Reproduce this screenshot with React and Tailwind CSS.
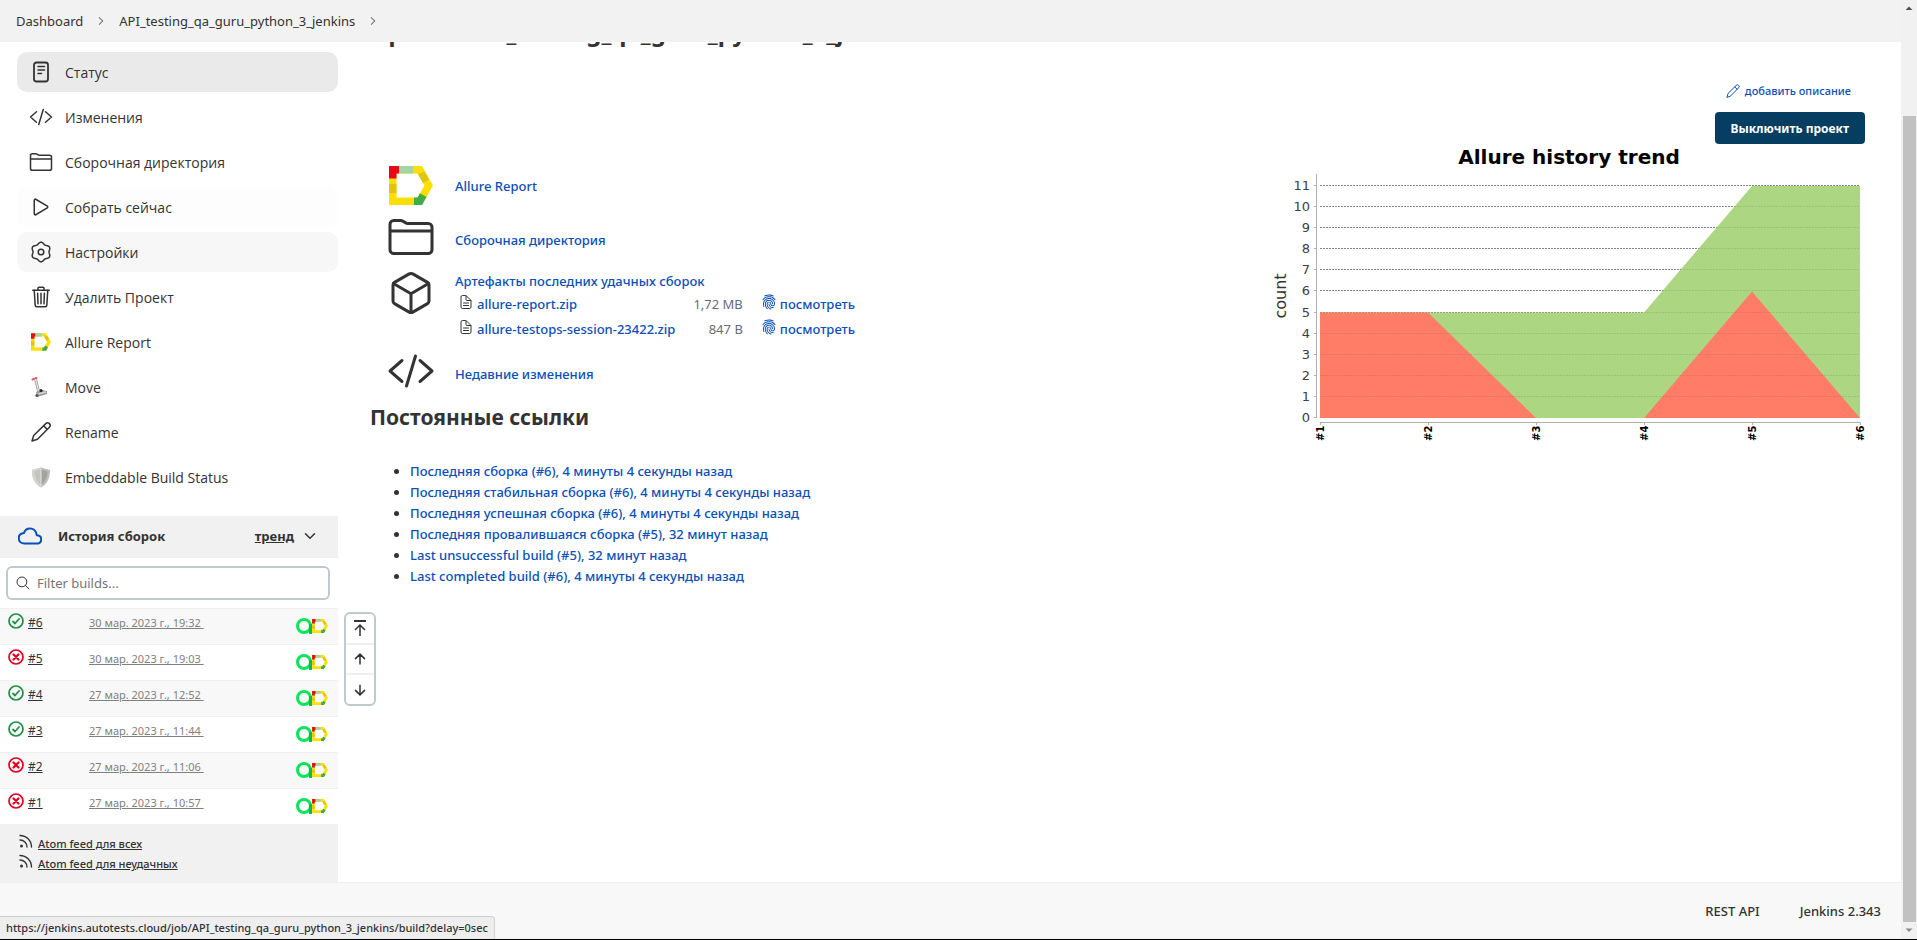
import React from "react";
import {
  IoCodeSlashOutline,
  IoFolderOutline,
  IoPlayOutline,
  IoTrashOutline,
  IoCubeOutline,
  IoCloudOutline,
  IoSearchOutline,
  IoChevronDown,
  IoChevronForward,
  IoDocumentTextOutline,
  IoFingerPrint,
  IoArrowUp,
  IoArrowDown,
} from "react-icons/io5";

function AllureLogo({ className }) {
  return (
    <svg viewBox="0 0 44 39" className={className} aria-hidden="true">
      <path d="M0 0H33L44 19.500 33 39H0zM7.500 7.500V31.500H28.500L35.500 19.500 28.500 7.500z" fill="#ffde05" fillRule="evenodd" />
      <path d="M0 0H10V7.500H7.500V12.500H0z" fill="#e60a14" />
      <path d="M10 0H24V7.500H10z" fill="#a6d3a4" />
      <path d="M29 8L35.500 5.500 40 13.500 34 17z" fill="#e0c414" />
      <path d="M25 31.500H28.500L31 27.300 37.500 31 33 39H25z" fill="#3dac49" />
      <path d="M0 18H7.500V27H0z" fill="#e0c414" />
    </svg>
  );
}

function TestOpsLogo() {
  return (
    <svg viewBox="0 0 16 16" className="size-4" aria-hidden="true">
      <circle cx="8" cy="8" r="6.500" fill="none" stroke="#0be45c" strokeWidth="3" />
      <path d="M14.500 6v10" stroke="#14b84e" strokeWidth="3" />
    </svg>
  );
}

function StatusIcon({ className }) {
  return (
    <svg viewBox="0 0 24 24" className={className} aria-hidden="true" fill="none" stroke="currentColor" strokeLinecap="round">
      <rect x="5" y="2.500" width="14" height="19" rx="2.500" strokeWidth="1.800" />
      <path d="M9 6.500h6.500M9 10h6.500M9 13.500h3.500" strokeWidth="1.500" />
    </svg>
  );
}

const gearPath =
  Array.from({ length: 72 }, (_, i) => {
    const t = (i * Math.PI) / 36;
    const r = 8.9 + 0.9 * Math.cos(6 * t);
    return `${i ? "L" : "M"}${(12 + r * Math.sin(t)).toFixed(2)} ${(12 - r * Math.cos(t)).toFixed(2)}`;
  }).join("") + "z";

function GearIcon({ className }) {
  return (
    <svg viewBox="0 0 24 24" className={className} aria-hidden="true" fill="none" stroke="currentColor" strokeWidth="1.500" strokeLinejoin="round">
      <path d={gearPath} />
      <circle cx="12" cy="12" r="2.800" />
    </svg>
  );
}

function PencilIcon({ className }) {
  return (
    <svg viewBox="0 0 24 24" className={className} aria-hidden="true" fill="none" stroke="currentColor" strokeWidth="1.500" strokeLinejoin="round" strokeLinecap="round">
      <path d="M3 21l1.700-5.500L16.800 3.600a2.500 2.500 0 0 1 3.600 3.600L8.500 19.300zM14.600 5.800l3.600 3.600" />
    </svg>
  );
}

function MoveIcon({ className }) {
  return (
    <svg viewBox="0 0 24 24" className={className} aria-hidden="true">
      <path d="M3.500 4.500L7.500 3" stroke="#d9606a" strokeWidth="2" strokeLinecap="round" />
      <path d="M6.500 4L10 18" stroke="#a5a5a5" strokeWidth="3" />
      <path d="M6.500 4L10 18" stroke="#efefef" strokeWidth="1" />
      <path d="M7 17l5-2 6 1v3l-10 3z" fill="#9a9a9a" />
      <path d="M9 19l8-2" stroke="#d6d6d6" strokeWidth="1.500" />
      <circle cx="12" cy="15.500" r="1.500" fill="#222" />
      <circle cx="8" cy="20.500" r="1.600" fill="#555" />
    </svg>
  );
}

function ShieldIcon({ className }) {
  return (
    <svg viewBox="0 0 24 24" className={className} aria-hidden="true">
      <path d="M12 2.500l9 2.500c.3 7-2.500 14-9 17.500C5.500 19 2.700 12 3 5z" fill="#bdbdb9" />
      <path d="M12 2.500v20C5.500 19 2.700 12 3 5z" fill="#d3d3cf" />
      <path d="M12 4.500l-6.500 2C5.500 12 8 17 12 20z" fill="#c4c4c0" />
      <path d="M12 4.500l6.500 2C18.500 12 16 17 12 20z" fill="#a3a39f" />
      <path d="M12 4v17" stroke="#e6e6e4" strokeWidth="1" />
    </svg>
  );
}

function FeedIcon() {
  return (
    <svg viewBox="0 0 16 16" className="size-4" aria-hidden="true" fill="none" stroke="#333" strokeWidth="1.400" strokeLinecap="round">
      <circle cx="3.500" cy="12" r="1.500" fill="#333" stroke="none" />
      <path d="M2 6a7 7 0 0 1 7 7M2 1.500a11.500 11.500 0 0 1 11.500 11.500" />
    </svg>
  );
}

function StatusBall({ ok }) {
  return (
    <svg viewBox="0 0 16 16" className="size-4 shrink-0" role="img" aria-label={ok ? "Success" : "Failed"} fill="none" stroke={ok ? "#1e8f46" : "#e6001f"}>
      <circle cx="8" cy="8" r="7" strokeWidth="1.700" />
      {ok ? (
        <path d="M5 8.500l2 2 4-4.500" strokeWidth="1.800" strokeLinecap="round" strokeLinejoin="round" />
      ) : (
        <path d="M5.500 5.500l5 5M10.500 5.500l-5 5" strokeWidth="2.200" strokeLinecap="round" />
      )}
    </svg>
  );
}

function TopIcon() {
  return (
    <svg viewBox="0 0 16 16" className="size-4" aria-hidden="true" fill="none" stroke="#333" strokeWidth="1.500">
      <path d="M2 1h12" strokeWidth="2" />
      <path d="M8 16V5M3 10l5-5 5 5" />
    </svg>
  );
}

const tasks = [
  { label: "Статус", Icon: StatusIcon, size: "size-6", tone: "bg-[#eaeaea]" },
  { label: "Изменения", Icon: IoCodeSlashOutline, size: "size-6", tone: "" },
  { label: "Сборочная директория", Icon: IoFolderOutline, size: "size-6", tone: "" },
  { label: "Собрать сейчас", Icon: IoPlayOutline, size: "size-6", tone: "bg-[#fdfdfd]" },
  { label: "Настройки", Icon: GearIcon, size: "size-6", tone: "bg-[#f7f7f7]" },
  { label: "Удалить Проект", Icon: IoTrashOutline, size: "size-6", tone: "" },
  { label: "Allure Report", Icon: AllureLogo, size: "mx-0.5 h-[18px] w-5", tone: "" },
  { label: "Move", Icon: MoveIcon, size: "size-6", tone: "" },
  { label: "Rename", Icon: PencilIcon, size: "size-6", tone: "" },
  { label: "Embeddable Build Status", Icon: ShieldIcon, size: "size-6", tone: "" },
];

const builds = [
  { id: "#6", ok: true, date: "30 мар. 2023 г., 19:32" },
  { id: "#5", ok: false, date: "30 мар. 2023 г., 19:03" },
  { id: "#4", ok: true, date: "27 мар. 2023 г., 12:52" },
  { id: "#3", ok: true, date: "27 мар. 2023 г., 11:44" },
  { id: "#2", ok: false, date: "27 мар. 2023 г., 11:06" },
  { id: "#1", ok: false, date: "27 мар. 2023 г., 10:57" },
];

const permalinks = [
  "Последняя сборка (#6), 4 минуты 4 секунды назад",
  "Последняя стабильная сборка (#6), 4 минуты 4 секунды назад",
  "Последняя успешная сборка (#6), 4 минуты 4 секунды назад",
  "Последняя провалившаяся сборка (#5), 32 минут назад",
  "Last unsuccessful build (#5), 32 минут назад",
  "Last completed build (#6), 4 минуты 4 секунды назад",
];

const artifacts = [
  { name: "allure-report.zip", size: "1,72 MB" },
  { name: "allure-testops-session-23422.zip", size: "847 B" },
];

const failed = [5, 5, 0, 0, 6, 0];
const total = [5, 5, 5, 5, 11, 11];

function TrendChart() {
  const left = 55;
  const step = 108;
  const base = 274;
  const unit = 21.1;
  const x = (i) => left + i * step;
  const y = (v) => base - v * unit;
  const area = (vals) =>
    `${x(0)},${base} ` + vals.map((v, i) => `${x(i)},${y(v)}`).join(" ") + ` ${x(5)},${base}`;
  const levels = Array.from({ length: 12 }, (_, i) => i);
  const lineY = (v) => Math.round(y(v)) - 0.5;
  return (
    <svg width="600" height="304" viewBox="0 0 600 304" role="img" aria-label="Allure history trend" fontFamily="DejaVu Sans, sans-serif">
      <clipPath id="total-area">
        <polygon points={area(total)} />
      </clipPath>
      <text x="304" y="20" textAnchor="middle" fontSize="20" fontWeight="700" fill="#000">
        Allure history trend
      </text>
      {levels.slice(1).map((v) => (
        <line key={v} x1={left} x2={x(5)} y1={lineY(v)} y2={lineY(v)} stroke="#808080" strokeDasharray="2 1" />
      ))}
      <polygon points={area(total)} fill="#add683" />
      <polygon points={area(failed)} fill="#ff7d66" />
      <g clipPath="url(#total-area)">
        {levels.slice(1).map((v) => (
          <line key={v} x1={left} x2={x(5)} y1={lineY(v)} y2={lineY(v)} stroke="#404040" strokeOpacity="0.15" strokeDasharray="2 1" />
        ))}
      </g>
      <path d={`M51.5 30V${base}`} stroke="#b0b0b0" />
      <path d={`M${left} 278.5H${x(5) + 1}`} stroke="#b0b0b0" />
      {levels.map((v) => (
        <g key={v}>
          <path d={`M49 ${lineY(v)}h3`} stroke="#b0b0b0" />
          <text x="45" y={Math.round(y(v)) + 4} textAnchor="end" fontSize="13" fill="#404040">
            {v}
          </text>
        </g>
      ))}
      {failed.map((_, i) => (
        <g key={i}>
          <path d={`M${x(i) + 0.5} 278v3`} stroke="#b0b0b0" />
          <text transform={`translate(${x(i) + 4} 297) rotate(-90)`} fontSize="10" fontWeight="700" fill="#000">
            #{i + 1}
          </text>
        </g>
      ))}
      <text transform="translate(21 152) rotate(-90)" textAnchor="middle" fontSize="16" fill="#333">
        count
      </text>
    </svg>
  );
}

const link = "text-[#0b4fb8]";

export default function App() {
  return (
    <div className="flex min-h-screen border-b border-black bg-white font-['Noto_Sans',sans-serif] text-[13px] leading-[21px] font-medium text-[#333]">
      <div className="relative flex min-w-0 flex-1 flex-col">
        <header className="relative z-10 h-[42px] bg-[#f2f2f2]">
          <nav aria-label="Breadcrumb" className="flex h-full items-center gap-3 pl-4 font-normal">
            <a href="#dashboard">Dashboard</a>
            <IoChevronForward className="size-3 text-[#808080]" />
            <a href="#project">API_testing_qa_guru_python_3_jenkins</a>
            <IoChevronForward className="size-3 text-[#808080]" />
          </nav>
        </header>

        <div className="flex">
          <aside className="flex w-[338px] shrink-0 flex-col">
            <nav aria-label="Project" className="flex flex-col gap-[5px] pt-[10px] pb-[19px] pl-[17px] font-['Open_Sans',sans-serif] text-[14px]">
              {tasks.map(({ label, Icon, size, tone }) => (
                <a key={label} href="#task" className={`flex h-10 items-center gap-3 rounded-[10px] pl-3 ${tone}`}>
                  <Icon className={size} />
                  <span>{label}</span>
                </a>
              ))}
            </nav>

            <div className="flex h-[42px] items-center bg-[#f1f1f1] pr-[20px] pb-0.5 pl-[18px]">
              <IoCloudOutline className="size-6 text-[#0b4fb8] [&_path]:[stroke-width:44]" />
              <h2 className="ml-4 flex-1 font-bold">История сборок</h2>
              <a href="#trend" className="font-bold underline">тренд</a>
              <IoChevronDown className="ml-2 size-4" />
            </div>

            <div className="py-2 pr-2 pl-[6px]">
              <label className="flex h-[34px] items-center gap-1.5 rounded-md border-2 border-[#bfcacd] px-[7px]">
                <IoSearchOutline className="size-4 shrink-0" />
                <input type="text" aria-label="Filter builds" placeholder="Filter builds..." className="w-full font-normal outline-none placeholder:text-[#757575]" />
              </label>
            </div>

            <table className="w-full border-separate border-spacing-0 text-[11px] leading-5 font-normal">
              <tbody>
                {builds.map((b, i) => (
                  <tr key={b.id} className={`h-9 *:border-t *:border-[#efefef] ${i % 2 ? "bg-white" : "bg-[#f8f8f8]"}`}>
                    <td className="w-[89px] pl-2 align-top">
                      <span className="flex items-start gap-1 pt-1">
                        <StatusBall ok={b.ok} />
                        <a href="#build" className="text-[12px] underline">{b.id}</a>
                      </span>
                    </td>
                    <td className="pt-1 align-top">
                      <a href="#build" className="whitespace-pre text-[#808080] underline">{b.date + " "}</a>
                    </td>
                    <td className="pr-[10px] pb-px">
                      <span className="flex items-center justify-end">
                        <TestOpsLogo />
                        <AllureLogo className="h-[14px] w-4" />
                      </span>
                    </td>
                  </tr>
                ))}
              </tbody>
            </table>

            <div className="flex h-[58px] flex-col bg-[#f1f1f1] pt-[10px] pl-[18px] text-[11px] leading-5">
              {["Atom feed для всех", "Atom feed для неудачных"].map((t) => (
                <a key={t} href="#feed" className="flex items-start gap-1">
                  <FeedIcon />
                  <span className="underline">{t}</span>
                </a>
              ))}
            </div>
          </aside>

          <main className="min-w-0 flex-1 pr-9 pl-8">
            <h1 className="-mt-[30px] h-10 text-[24px] leading-10 font-bold">Проект API_testing_qa_guru_python_3_jenkins</h1>
            <div className="flex justify-between">
              <div>
                <div className="mt-[107px] ml-[17px] grid grid-cols-[68px_auto] grid-rows-[54px_54px_auto_54px] items-center">
                  <AllureLogo className="mb-0.5 ml-0.5 h-[39px] w-11" />
                  <a href="#allure" className={link}>Allure Report</a>
                  <IoFolderOutline className="mb-1.5 size-12" />
                  <a href="#workspace" className={link}>Сборочная директория</a>
                  <IoCubeOutline className="mt-0.5 size-12 self-start" />
                  <div className="pt-1 pb-[5px]">
                    <a href="#artifacts" className={link}>Артефакты последних удачных сборок</a>
                    <table>
                      <tbody>
                        {artifacts.map((a) => (
                          <tr key={a.name} className="h-[25px]">
                            <td className="pl-[3px]">
                              <a href="#file" className={`flex items-start gap-[3px] ${link}`}>
                                <IoDocumentTextOutline className="size-4 text-[#333]" />
                                {a.name}
                              </a>
                            </td>
                            <td className="pl-[18px] text-right font-normal text-[#6b6b75]">{a.size}</td>
                            <td className="pl-[18px]">
                              <a href="#view" className={`flex items-start gap-[3px] ${link}`}>
                                <IoFingerPrint className="size-4" />
                                посмотреть
                              </a>
                            </td>
                          </tr>
                        ))}
                      </tbody>
                    </table>
                  </div>
                  <IoCodeSlashOutline className="mb-1.5 size-12" />
                  <a href="#changes" className={link}>Недавние изменения</a>
                </div>
                <h2 className="mt-px text-[21px] leading-[30px] font-bold">Постоянные ссылки</h2>
                <ul className="mt-[29px] list-disc pl-10">
                  {permalinks.map((t) => (
                    <li key={t}>
                      <a href="#permalink" className={link}>{t}</a>
                    </li>
                  ))}
                </ul>
              </div>

              <div className="flex flex-col items-end pt-7">
                <a href="#description" className={`mr-[14px] flex items-center gap-1 text-[11px] ${link}`}>
                  <PencilIcon className="size-4" />
                  добавить описание
                </a>
                <button type="button" className="mt-[11px] h-8 rounded bg-[#063e61] px-4 text-[12px] font-bold text-white">
                  Выключить проект
                </button>
                <TrendChart />
              </div>
            </div>
          </main>
        </div>

        <div className="absolute top-[612px] left-[344px] flex h-[94px] w-8 flex-col divide-y-2 divide-[#efefef] rounded-md border-2 border-[#bfcacd] bg-white">
          <button type="button" aria-label="Newest" className="flex flex-1 items-center justify-center"><TopIcon /></button>
          <button type="button" aria-label="Newer" className="flex flex-1 items-center justify-center"><IoArrowUp className="size-4" /></button>
          <button type="button" aria-label="Older" className="flex flex-1 items-center justify-center"><IoArrowDown className="size-4" /></button>
        </div>

        <footer className="flex flex-1 items-center justify-end gap-10 border-t border-[#efefef] bg-[#f8f8f8] pr-5">
          <a href="#api">REST API</a>
          <a href="#version">Jenkins 2.343</a>
        </footer>

        <div className="absolute bottom-0 left-0 h-[23px] rounded-tr border-t border-r border-[#d0d0d0] bg-[#eee] px-[6px] text-[11px] leading-[22px]">
          https://jenkins.autotests.cloud/job/API_testing_qa_guru_python_3_jenkins/build?delay=0sec
        </div>
      </div>

      <div aria-hidden="true" className="flex w-4 shrink-0 flex-col items-center bg-[#f1f1f1]">
        <svg viewBox="0 0 16 17" className="h-[17px] w-4"><path d="M4.500 10h7L8 6.500z" fill="#505050" /></svg>
        <div className="mt-[99px] w-[13px] flex-1 bg-[#c1c1c1]" />
        <svg viewBox="0 0 16 17" className="h-[17px] w-4"><path d="M4.500 6.500h7L8 10z" fill="#8a8a8a" /></svg>
      </div>
    </div>
  );
}
